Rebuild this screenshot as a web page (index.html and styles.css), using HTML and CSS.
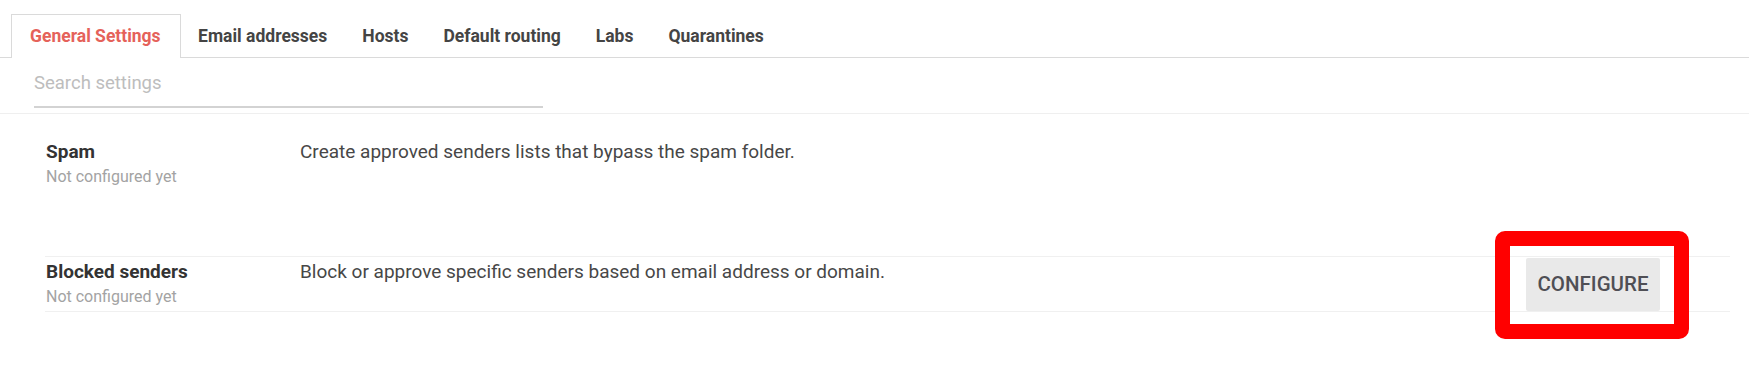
FILE: index.html
```html
<!DOCTYPE html>
<html lang="en">
<head>
<meta charset="utf-8">
<title>General Settings</title>
<link rel="stylesheet" href="styles.css">
</head>
<body>
<div class="page">
  <nav class="tabs">
    <div class="tab active">General Settings</div>
    <div class="tab">Email addresses</div>
    <div class="tab">Hosts</div>
    <div class="tab">Default routing</div>
    <div class="tab">Labs</div>
    <div class="tab">Quarantines</div>
  </nav>
  <div class="search">
    <div class="search-field">Search settings</div>
  </div>
  <div class="settings">
    <div class="row">
      <div class="name">
        <div class="title">Spam</div>
        <div class="sub">Not configured yet</div>
      </div>
      <div class="desc">Create approved senders lists that bypass the spam folder.</div>
    </div>
    <div class="row lined">
      <div class="name">
        <div class="title">Blocked senders</div>
        <div class="sub">Not configured yet</div>
      </div>
      <div class="desc">Block or approve specific senders based on email address or domain.</div>
      <div class="action">
        <button class="btn">CONFIGURE</button>
        <span class="highlight"></span>
      </div>
    </div>
  </div>
</div>
</body>
</html>
```
FILE: styles.css
```css
html, body {
  margin: 0;
  padding: 0;
  background: #ffffff;
}
body {
  font-family: Roboto, "Liberation Sans", Arial, sans-serif;
  color: #3c3c3c;
  width: 1749px;
  height: 372px;
  overflow: hidden;
}
.page {
  padding-top: 14px;
}
.tabs {
  display: flex;
  padding-left: 11px;
  border-bottom: 1px solid #dadada;
}
.tab {
  font-size: 17.5px;
  font-weight: 700;
  line-height: 42px;
  padding: 0 16.5px;
  border: 1px solid transparent;
  border-bottom: none;
  color: #444444;
  margin-bottom: -1px;
}
.tab.active {
  color: #e5625a;
  border-color: #dadada;
  background: #ffffff;
  padding: 0 19px 1px 18px;
}
.search {
  padding: 0 0 5px 34px;
  border-bottom: 1px solid #efefef;
}
.search-field {
  width: 509px;
  font-size: 18.5px;
  line-height: 24px;
  padding: 13px 0 11px;
  color: #bdbdbd;
  border-bottom: 2px solid #d3d3d3;
}
.settings {
  display: flex;
  flex-direction: column;
  gap: 64px;
  padding: 22px 19px 0 45px;
}
.row {
  display: grid;
  grid-template-columns: 254px 1fr auto;
  align-items: start;
  padding: 0 70px 0 1px;
  border-top: 1px solid transparent;
  border-bottom: 1px solid transparent;
}
.row.lined {
  border-color: #f0f0f0;
}
.name {
  padding: 4px 0 3px;
}
.title {
  font-size: 19px;
  font-weight: 700;
  line-height: 22px;
  color: #333333;
}
.sub {
  font-size: 16px;
  line-height: 22px;
  margin-top: 3px;
  color: #a3a3a3;
}
.desc {
  font-size: 19px;
  line-height: 22px;
  padding-top: 4px;
  color: #474747;
}
.action {
  position: relative;
  align-self: center;
}
.btn {
  display: block;
  width: 134px;
  height: 53px;
  border: none;
  border-radius: 2px;
  background: #e9e9e9;
  color: #4f4f55;
  font-family: Roboto, "Liberation Sans", Arial, sans-serif;
  font-size: 20.5px;
  font-weight: 500;
  padding: 0;
}
.highlight {
  position: absolute;
  top: -27px;
  left: -31px;
  right: -29px;
  bottom: -28px;
  border: 15px solid #ff0000;
  border-radius: 10px;
  pointer-events: none;
}
```
